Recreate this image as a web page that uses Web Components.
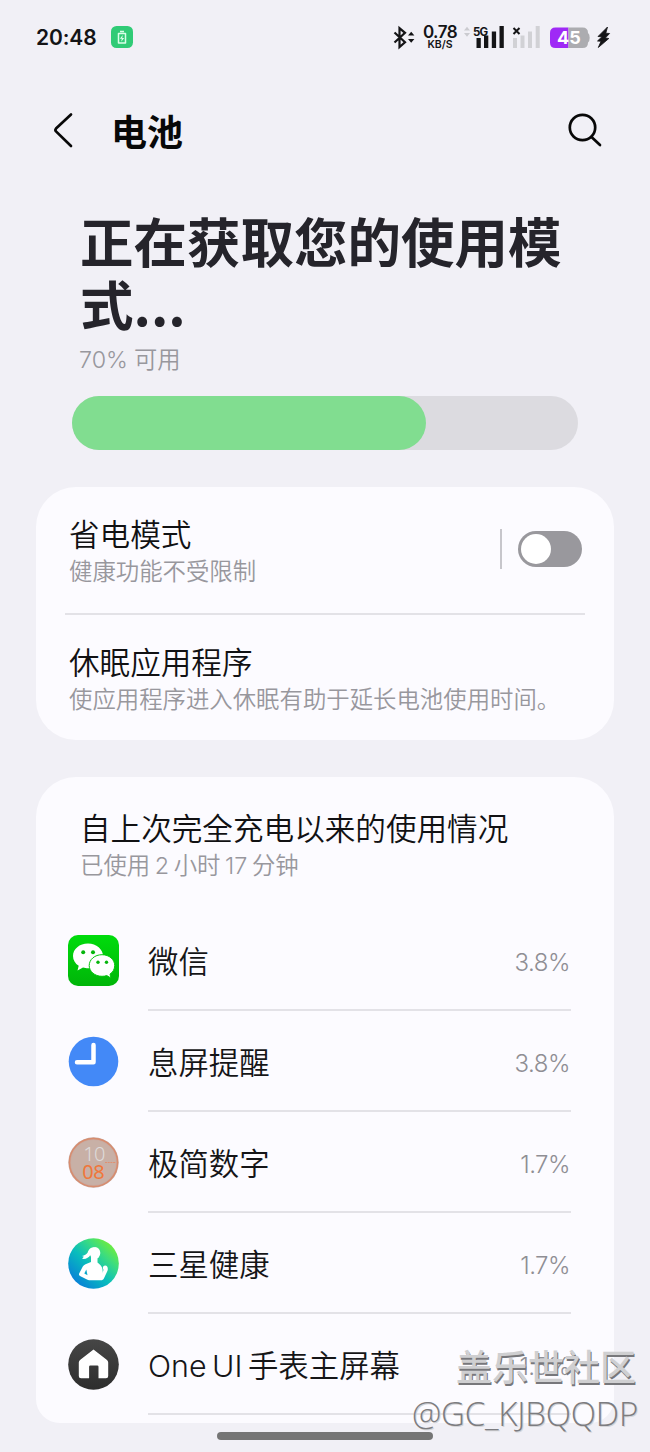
<!DOCTYPE html>
<html lang="zh-CN">
<head>
<meta charset="UTF-8">
<title>电池</title>
<style>
    html, body {
        margin: 0;
        padding: 0;
    }
    body {
        width: 650px;
        height: 1452px;
        overflow: hidden;
        background: #f1f0f6;
        color: #111;
        font-family: Inter, "Noto Sans CJK SC", sans-serif;
    }
</style>
</head>
<body>
<battery-screen></battery-screen>

<script>
/* Registers an element whose shadow root is built from render(el) */
function component(name, render) {
    customElements.define(name, class extends HTMLElement {
        constructor() {
            super();
            this.attachShadow({ mode: 'open' });
        }

        connectedCallback() {
            this.shadowRoot.innerHTML = render(this);
        }
    });
}

// App icons, all drawn on a 51x51 canvas
const appIcons = {
    wechat: `
        <defs><linearGradient id="g" x2="0" y2="1"><stop stop-color="#00dc0c"/><stop offset="1" stop-color="#00b509"/></linearGradient></defs>
        <rect width="51" height="51" rx="10" fill="url(#g)"/>
        <path d="M20 8.500C11.500 8.500 5 14 5 21c0 4.200 2.200 7.500 5.700 9.800L9.500 35.500l5.500-2.900c2 .6 3.700.8 6.500.7C30 33 35 27.500 35 21S28.500 8.500 20 8.500z" fill="#fff"/>
        <path d="M34 19.700c-7.200 0-12.800 4.800-12.800 10.800S26.800 41.300 34 41.300c1.800 0 3.300-.2 4.800-.7l4.200 2.500-1-4c3-2 4.700-5 4.700-8.600 0-6-5.500-10.800-12.700-10.800z" fill="#fff" stroke="#04c60b" stroke-width="1"/>
        <g fill="#06b50c"><circle cx="15.200" cy="17.200" r="2"/><circle cx="25" cy="17.200" r="2"/><circle cx="30" cy="27.300" r="1.700"/><circle cx="38.500" cy="27.300" r="1.700"/></g>`,
    clock: `
        <circle cx="25.500" cy="25.500" r="24.800" fill="#4389f7"/>
        <path d="M25.500 9v17.300H9" fill="none" stroke="#fff" stroke-width="4.500" stroke-linecap="round" stroke-linejoin="round"/>`,
    digits: `
        <circle cx="25.500" cy="25.500" r="25.200" fill="#c9aaa0"/>
        <circle cx="25.500" cy="25.500" r="24" fill="none" stroke="#d88c6e" stroke-width="1.500"/>
        <circle cx="25.500" cy="25.500" r="22.500" fill="#c8b0a6"/>
        <path d="M37 25.500h11" stroke="#e09070" stroke-dasharray="2 .7"/>
        <text x="26" y="23.500" text-anchor="middle" font-size="20" font-weight="300" fill="#dedbda">10</text>
        <text x="25.200" y="41.800" text-anchor="middle" font-size="20" fill="#f0773a">08</text>`,
    health: `
        <defs><linearGradient id="g" x1=".9" y1=".1" x2=".15" y2=".9"><stop stop-color="#76ef34"/><stop offset=".28" stop-color="#3bdc80"/><stop offset=".58" stop-color="#08bdbd"/><stop offset="1" stop-color="#087fd8"/></linearGradient></defs>
        <circle cx="25.500" cy="25.500" r="25.300" fill="url(#g)"/>
        <g fill="#fff">
            <ellipse cx="27" cy="15" rx="5.300" ry="6"/>
            <path d="M26 9.200c-4 0-5.500 2.800-6.300 5.300-1.200 2-3.200 2.800-5.700 3.500l1.900.8-1.900 2c4 .5 6.700-1 8.300-3.800z"/>
            <path d="M23 18v6l-5.500 2.300c-1.800.8-2.600 2-3.500 3.700l-2.700 5.300c-.6 1.200-.4 2 .7 2.600l7 3.700q1 .7 2.200.7h11.600c1.600 0 2.500-.6 3.200-2l3.400-7.200c1-2.500.2-5.600-2.200-5.600-2.300 0-3 2.500-1.700 4.200L34.700 35c.2-4-.7-7-3.200-8.800L29.500 24.500V18z"/>
        </g>
        <path d="M18.300 31.500l-2 4 3.200 1.800z" fill="#0ca8cc"/>`,
    home: `
        <defs><linearGradient id="g" x2="0" y2="1"><stop stop-color="#464646"/><stop offset="1" stop-color="#2d2d2d"/></linearGradient></defs>
        <circle cx="25.500" cy="25.500" r="25.300" fill="url(#g)"/>
        <path d="M25.500 10.500L39 21q1.200 1 1.200 2.500V37q0 2.200-2.200 2.200h-7.500V27.700q0-1.200-1.200-1.200h-7q-1.200 0-1.200 1.200v11.500H13q-2.200 0-2.200-2.200V23.500q0-1.500 1.200-2.500z" fill="#fff"/>`
};

component('app-icon', el => `
    <style>
        :host { display: block; width: 51px; height: 51px; }
        svg { display: block; font-family: "Noto Sans", sans-serif; letter-spacing: -.6px; }
    </style>
    <svg width="51" height="51" viewBox="0 0 51 51">${appIcons[el.getAttribute('name')]}</svg>
`);

component('status-bar', () => `
    <style>
        :host { display: flex; height: 75px; box-sizing: border-box; padding: 0 40px 0 36px; color: #141416; }
        .time { font: 600 21px/75px Inter, sans-serif; letter-spacing: -.1px; width: 75px; }
        svg { display: block; }
        .right { margin-left: auto; display: flex; padding-top: 24px; }
        .speed { display: flex; flex-direction: column; align-items: center; width: 36px; margin: 0 6px 0 5px; font: 600 17px/16px Inter, sans-serif; white-space: nowrap; }
        .speed small { font-size: 10.500px; line-height: 9px; }
        .speed span { letter-spacing: -.5px; }
        text { font-family: Inter, sans-serif; font-weight: 700; }
    </style>
    <span class="time">20:48</span>
    <svg width="22" height="75" viewBox="0 0 22 75">
        <rect y="26" width="22" height="22" rx="5.500" fill="#30cb76"/>
        <path d="M9 31.500h4M7.500 33.500h7v9.500h-7z" fill="none" stroke="#d9ffe8" stroke-width="1.500" stroke-linejoin="round"/>
        <path d="M11.800 35l-3 3.700h2l-.6 3 3-3.800h-2z" fill="#e2ffec"/>
    </svg>
    <div class="right">
        <svg width="25" height="28" viewBox="0 0 25 28">
            <path d="M2.500 8.500l10.500 9.800-5.500 4.700V4.200L13 8.800 2.500 18.500" fill="none" stroke="#141416" stroke-width="2.200"/>
            <path d="M16 11.500l3.200-3.700 3.200 3.700zM16 15l3.200 3.700 3.200-3.700z" fill="#141416"/>
        </svg>
        <div class="speed"><span>0.78</span><small>KB/S</small></div>
        <svg width="168" height="28" viewBox="463.500 0 168 28" style="margin-right:-22px">
            <path d="M463.500 6.500l3-3.700 3 3.700zM463.500 9l3 3.700 3-3.700z" fill="#cbcbd0"/>
            <text x="472.500" y="11.500" font-size="11.500" letter-spacing="-.8" fill="#141416">5G</text>
            <path d="M476 14h4.300v10H476zM483.500 11.500h4.300V24h-4.300zM491.300 7.500h4.300V24h-4.300zM499 2h4.300v22H499z" fill="#141416"/>
            <path d="M513 4l6 6M519 4l-6 6" stroke="#141416" stroke-width="2"/>
            <path d="M512.500 14h4v10h-4zM520 11.500h4V24h-4zM527.500 7.500h4V24h-4zM535.200 2h4v22h-4z" fill="#d1d1d5"/>
            <path d="M555 3.500h13V24h-13q-5.500 0-5.500-5.500V9q0-5.500 5.500-5.500z" fill="#9f29f6"/>
            <path d="M568 3.500h14q5.500 0 5.500 5.500v9.500q0 5.500-5.500 5.500h-14z" fill="#acacb0"/>
            <path d="M587.500 9q1.700 1 1.700 4.700t-1.700 4.800z" fill="#acacb0"/>
            <text x="568.300" y="20.300" text-anchor="middle" font-size="18" fill="#fff">45</text>
            <path d="M607 3l-9.500 9.500 4 .2-4.500 4.300 3.500.3-2.700 6.200 10.500-9-3.500-.5 4.300-4.500-3.800-.3z" fill="#141416" stroke="#141416" stroke-width=".8" stroke-linejoin="round"/>
        </svg>
    </div>
`);

component('title-bar', el => `
    <style>
        :host { display: flex; align-items: center; height: 110px; padding: 0 47px 0 52px; }
        h1 { flex: 1; margin: 0 0 0 35px; font: 700 36px/50px "Noto Sans CJK SC", sans-serif; color: #080808; }
        svg { display: block; fill: none; stroke: #080808; stroke-width: 2.700; stroke-linecap: round; stroke-linejoin: round; }
    </style>
    <svg width="24" height="38" viewBox="0 0 24 38"><path d="M19 3.500L4 17.600q-1.200 1.400 0 2.800L19 35"/></svg>
    <h1>${el.getAttribute('label')}</h1>
    <svg width="36" height="38" viewBox="0 0 36 38"><circle cx="15.500" cy="16.500" r="12.700"/><path d="M24.500 26L33 34"/></svg>
`);

component('battery-summary', el => `
    <style>
        :host { display: block; padding: 23px 72px 0; }
        h2 { margin: 0; padding-left: 8px; font: 700 53.500px/63px "Noto Sans CJK SC", sans-serif; color: #25242b; width: 484px; word-break: break-all; }
        p { margin: 11px 0 22px 7px; font-size: 23.300px; font-weight: 350; line-height: 29px; color: #98979d; word-spacing: -.5px; }
        .track { height: 54px; border-radius: 27px; background: #dcdbe0; }
        .level { height: 54px; border-radius: 27px; background: #81dd90; width: ${el.getAttribute('level')}%; }
    </style>
    <h2><slot></slot></h2>
    <p>${el.getAttribute('level')}% 可用</p>
    <div class="track"><div class="level"></div></div>
`);

component('settings-card', () => `
    <style>
        :host { display: block; box-sizing: border-box; width: 578px; margin: 0 36px; border-radius: 40px; background: #fcfbff; overflow: hidden; }
    </style>
    <slot></slot>
`);

component('setting-row', el => `
    <style>
        :host { display: flex; align-items: center; box-sizing: border-box; padding: 0 33px; height: 125.500px; }
        .text { flex: 1; white-space: nowrap; padding-top: 5px; }
        .title { font-size: 30.600px; font-weight: 350; line-height: 40px; color: #111113; }
        .sub { font-size: 23.400px; font-weight: 350; line-height: 34px; color: #98979d; word-spacing: -2px; }
    </style>
    <div class="text">
        <div class="title">${el.getAttribute('label')}</div>
        <div class="sub">${el.getAttribute('sub')}</div>
    </div>
    <slot></slot>
`);

component('toggle-switch', () => `
    <style>
        :host { display: flex; align-items: center; gap: 16px; margin: -2px -1px 0 0; }
        .line { width: 2px; height: 40px; background: #c7c6cb; }
        .track { box-sizing: border-box; width: 64px; height: 36px; padding: 3px; border-radius: 18px; background: #99989d; }
        .thumb { width: 30px; height: 30px; border-radius: 50%; background: #fff; }
    </style>
    <div class="line"></div>
    <div class="track"><div class="thumb"></div></div>
`);

component('app-row', el => `
    <style>
        :host { display: flex; height: 101.100px; padding: 0 43px 0 32px; }
        app-icon { margin: 25px 29px 0 0; }
        .body { flex: 1; display: flex; justify-content: space-between; align-items: center; box-sizing: border-box; border-bottom: 2px solid #e3e2e7; padding: 5px 1px 0 0; white-space: nowrap; }
        .name { font-size: 30.400px; font-weight: 350; color: #151517; line-height: 40px; word-spacing: -3px; }
        .value { font-size: 24px; font-weight: 350; letter-spacing: -.5px; color: #8f8e94; }
    </style>
    <app-icon name="${el.getAttribute('icon')}"></app-icon>
    <div class="body">
        <span class="name">${el.getAttribute('label')}</span>
        <span class="value">${el.getAttribute('value')}</span>
    </div>
`);

component('water-mark', () => `
    <style>
        :host { position: absolute; right: 12px; top: 1338px; display: block; text-align: right; white-space: nowrap; }
        .site { margin-right: 2px; font: 500 36px/54px "Noto Sans CJK SC", sans-serif; color: #cfcfd1; text-shadow: 1px 1.500px 0 #77777b; }
        .user { font: 300 33px/44px "Open Sans", sans-serif; letter-spacing: -.2px; color: #7c7c80; text-shadow: 1px 1px 0 #d4d4d7; }
    </style>
    <div class="site">盖乐世社区</div>
    <div class="user">@GC_KJBQQDP</div>
`);

component('battery-screen', () => `
    <style>
        :host { display: flex; flex-direction: column; position: relative; width: 650px; height: 1452px; overflow: hidden; }
        .modes { margin-top: 37px; height: 253px; }
        .usage { margin-top: 37px; height: 646px; border-radius: 40px 40px 24px 24px; }
        .divider { height: 2px; margin: 0 29px; background: #e3e2e7; }
        .usage setting-row { padding: 0 44px; height: 133px; }
        .handle { width: 216px; height: 8px; margin: 9px auto 0; border-radius: 4px; background: #757575; }
    </style>
    <status-bar></status-bar>
    <title-bar label="电池"></title-bar>
    <battery-summary level="70">正在获取您的使用模式...</battery-summary>
    <settings-card class="modes">
        <setting-row label="省电模式" sub="健康功能不受限制"><toggle-switch></toggle-switch></setting-row>
        <div class="divider"></div>
        <setting-row label="休眠应用程序" sub="使应用程序进入休眠有助于延长电池使用时间。"></setting-row>
    </settings-card>
    <settings-card class="usage">
        <setting-row label="自上次完全充电以来的使用情况" sub="已使用 2 小时 17 分钟"></setting-row>
        <app-row icon="wechat" label="微信" value="3.8%"></app-row>
        <app-row icon="clock" label="息屏提醒" value="3.8%"></app-row>
        <app-row icon="digits" label="极简数字" value="1.7%"></app-row>
        <app-row icon="health" label="三星健康" value="1.7%"></app-row>
        <app-row icon="home" label="One UI 手表主屏幕" value="1.5%"></app-row>
    </settings-card>
    <div class="handle"></div>
    <water-mark></water-mark>
`);
</script>
</body>
</html>
